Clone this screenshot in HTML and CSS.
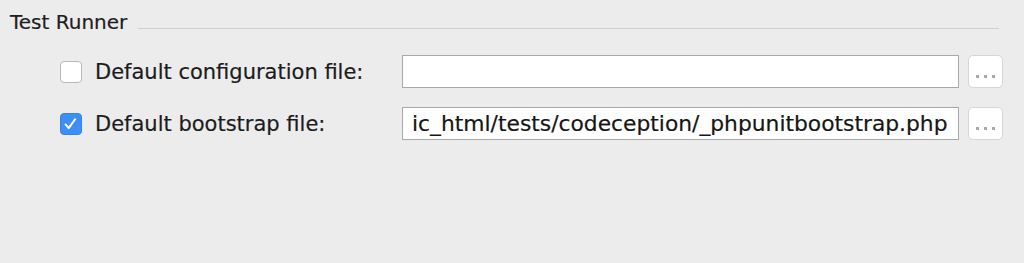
FILE: index.html
```html
<!DOCTYPE html>
<html>
<head>
<meta charset="utf-8">
<link rel="stylesheet" href="styles.css">
</head>
<body>
<div class="panel">
  <div class="group-title">
    <span class="title-text">Test Runner</span>
    <span class="title-line"></span>
  </div>
  <div class="rows">
    <div class="row">
      <label class="check-label">
        <span class="checkbox"></span>
        <span class="label-text">Default configuration file:</span>
      </label>
      <div class="field"></div>
      <div class="browse" title="..."><i class="dot"></i><i class="dot"></i><i class="dot"></i></div>
    </div>
    <div class="row">
      <label class="check-label">
        <span class="checkbox checked">
          <svg viewBox="0 0 22 22" width="22" height="22"><path d="M5 11.5 L8.5 15.5 L15.5 5.8" fill="none" stroke="#fff" stroke-width="2.2" stroke-linecap="round" stroke-linejoin="round"/></svg>
        </span>
        <span class="label-text">Default bootstrap file:</span>
      </label>
      <div class="field"><span class="field-text">ic_html/tests/codeception/_phpunitbootstrap.php</span></div>
      <div class="browse" title="..."><i class="dot"></i><i class="dot"></i><i class="dot"></i></div>
    </div>
  </div>
</div>
</body>
</html>
```
FILE: styles.css
```css
html, body {
  margin: 0;
  padding: 0;
  background: #ececec;
}
body {
  width: 1024px;
  height: 263px;
  overflow: hidden;
  font-family: "DejaVu Sans", "Liberation Sans", sans-serif;
  color: #1c1c1c;
}
.panel {
  padding: 11px 0 0 10px;
}
.group-title {
  display: flex;
  align-items: flex-start;
  height: 23px;
}
.title-text {
  font-size: 20px;
  line-height: 23px;
  color: #1e1e1e;
  -webkit-text-stroke: 0.2px #1e1e1e;
}
.title-line {
  flex: none;
  width: 861px;
  height: 1px;
  margin-left: 11px;
  margin-top: 17px;
  background: #cfcfcf;
}
.rows {
  display: flex;
  flex-direction: column;
  gap: 19px;
  margin-top: 21px;
  padding-left: 50px;
}
.row {
  display: flex;
  align-items: center;
  height: 33px;
}
.check-label {
  display: flex;
  align-items: center;
  width: 342px;
}
.checkbox {
  width: 22px;
  height: 22px;
  box-sizing: border-box;
  border: 1px solid #b9b9b9;
  border-radius: 4px;
  background: #fff;
  display: flex;
  align-items: center;
  justify-content: center;
  flex: none;
}
.checkbox.checked {
  background: #3d8ff6;
  border-color: #3583ea;
}
.checkbox svg {
  width: 22px;
  height: 22px;
}
.label-text {
  margin-left: 13px;
  font-size: 21px;
  -webkit-text-stroke: 0.2px #1c1c1c;
}
.field {
  width: 557px;
  height: 33px;
  box-sizing: border-box;
  border: 1px solid #a9a9a9;
  background: #fff;
  display: flex;
  align-items: center;
  padding-left: 9px;
  overflow: hidden;
}
.field-text {
  font-size: 21.8px;
  white-space: nowrap;
  color: #161616;
  -webkit-text-stroke: 0.2px #161616;
}
.browse {
  width: 35px;
  height: 33px;
  box-sizing: border-box;
  margin-left: 9px;
  border: 1px solid #d6d6d6;
  border-radius: 5px;
  background: #fff;
  display: flex;
  align-items: flex-end;
  justify-content: center;
  gap: 5px;
  padding-bottom: 9px;
}
.dot {
  display: block;
  width: 3px;
  height: 3px;
  background: #a8a8a8;
}
```
